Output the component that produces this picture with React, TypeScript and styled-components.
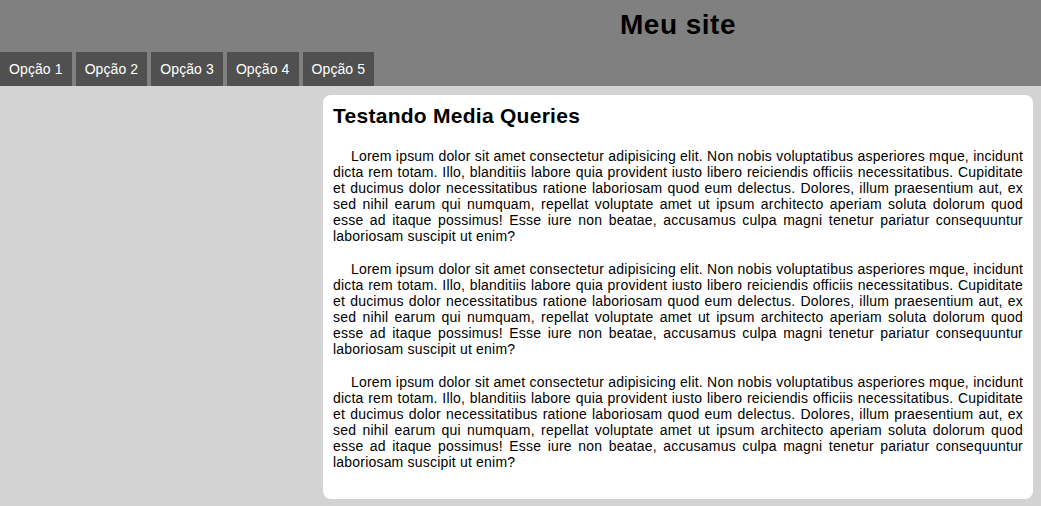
import React from "react";
import styled, { createGlobalStyle } from "styled-components";

const GlobalStyle = createGlobalStyle`
  html, body {
    margin: 0;
    padding: 0;
    background: #d3d3d3;
    font-family: "Liberation Sans", Arial, sans-serif;
    font-size: 14px;
    color: #000;
  }
`;

const Header = styled.header`
  background: #808080;
`;

const TitleRow = styled.div`
  display: grid;
  grid-template-columns: 323px 1fr;
  padding: 9px 8px 11px 0;
`;

const Title = styled.h1`
  grid-column: 2;
  margin: 0;
  font-size: 28px;
  font-weight: bold;
  line-height: 32px;
  letter-spacing: 0.5px;
  text-align: center;
`;

const Nav = styled.nav`
  display: flex;
  gap: 4px;
`;

const NavItem = styled.a`
  display: block;
  background: #505050;
  color: #fff;
  font-size: 14px;
  line-height: 16px;
  padding: 9px 9px;
  letter-spacing: 0.1px;
  text-decoration: none;
`;

const Layout = styled.div`
  display: grid;
  grid-template-columns: 323px 1fr;
  padding: 9px 8px 7px 0;
`;

const Aside = styled.aside``;

const Card = styled.main`
  background: #fff;
  border-radius: 8px;
  padding: 9px 10px 10px;
`;

const Heading = styled.h2`
  margin: 0 0 20px;
  font-size: 21px;
  line-height: 24px;
  font-weight: bold;
  letter-spacing: 0.27px;
`;

const Paragraph = styled.p`
  margin: 0 0 17px;
  font-size: 14px;
  line-height: 16px;
  letter-spacing: 0.2px;
  text-align: justify;
  text-indent: 18px;
  &:last-child {
    margin-bottom: 19px;
  }
`;

const LOREM =
  "Lorem ipsum dolor sit amet consectetur adipisicing elit. Non nobis voluptatibus asperiores mque, incidunt dicta rem totam. Illo, blanditiis labore quia provident iusto libero reiciendis officiis necessitatibus. Cupiditate et ducimus dolor necessitatibus ratione laboriosam quod eum delectus. Dolores, illum praesentium aut, ex sed nihil earum qui numquam, repellat voluptate amet ut ipsum architecto aperiam soluta dolorum quod esse ad itaque possimus! Esse iure non beatae, accusamus culpa magni tenetur pariatur consequuntur laboriosam suscipit ut enim?";

const options = ["Opção 1", "Opção 2", "Opção 3", "Opção 4", "Opção 5"];

export default function App() {
  return (
    <>
      <GlobalStyle />
      <Header>
        <TitleRow>
          <Title>Meu site</Title>
        </TitleRow>
        <Nav>
          {options.map((o) => (
            <NavItem key={o} href="#">
              {o}
            </NavItem>
          ))}
        </Nav>
      </Header>
      <Layout>
        <Aside />
        <Card>
          <Heading>Testando Media Queries</Heading>
          <Paragraph>{LOREM}</Paragraph>
          <Paragraph>{LOREM}</Paragraph>
          <Paragraph>{LOREM}</Paragraph>
        </Card>
      </Layout>
    </>
  );
}
